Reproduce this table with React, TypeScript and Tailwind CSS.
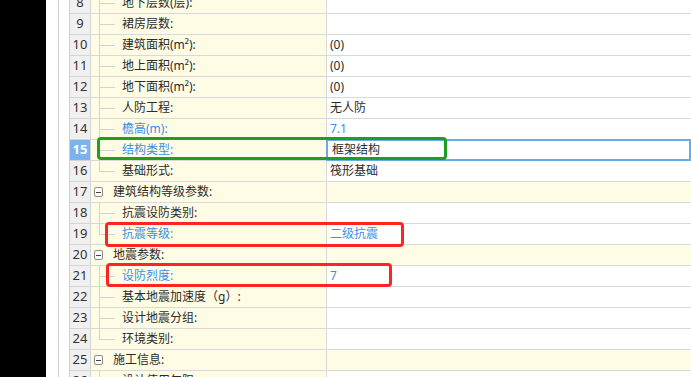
import React from "react";

type Row = {
  n: number;
  label: string;
  value?: string;
  group?: boolean;
  last?: boolean;
  blue?: boolean;
  valueBlue?: boolean;
  selected?: boolean;
};

const rows: Row[] = [
  { n: 8, label: "地下层数(层):" },
  { n: 9, label: "裙房层数:" },
  { n: 10, label: "建筑面积(m²):", value: "(0)" },
  { n: 11, label: "地上面积(m²):", value: "(0)" },
  { n: 12, label: "地下面积(m²):", value: "(0)" },
  { n: 13, label: "人防工程:", value: "无人防" },
  { n: 14, label: "檐高(m):", value: "7.1", blue: true, valueBlue: true },
  { n: 15, label: "结构类型:", value: "框架结构", blue: true, selected: true },
  { n: 16, label: "基础形式:", value: "筏形基础", last: true },
  { n: 17, label: "建筑结构等级参数:", group: true },
  { n: 18, label: "抗震设防类别:" },
  { n: 19, label: "抗震等级:", value: "二级抗震", blue: true, valueBlue: true, last: true },
  { n: 20, label: "地震参数:", group: true },
  { n: 21, label: "设防烈度:", value: "7", blue: true, valueBlue: true },
  { n: 22, label: "基本地震加速度（g）:" },
  { n: 23, label: "设计地震分组:" },
  { n: 24, label: "环境类别:", last: true },
  { n: 25, label: "施工信息:", group: true },
  { n: 26, label: "设计使用年限:" },
];

function CollapseBox() {
  return (
    <span className="absolute left-[3px] top-[5px] flex h-[10px] w-[9px] items-center justify-center rounded-[2px] border border-[#8c8c8c] bg-white">
      <span className="h-px w-[5px] bg-[#444]" />
    </span>
  );
}

function TreeLines({ last }: { last?: boolean }) {
  return (
    <>
      <span
        className={
          last
            ? "absolute left-[8px] top-0 h-[10px] w-px bg-[#d2d2d2]"
            : "absolute left-[8px] top-0 h-[21px] w-px bg-[#d2d2d2]"
        }
      />
      <span className="absolute left-[8px] top-[10px] h-px w-[16px] bg-[#d2d2d2]" />
    </>
  );
}

function GridRow({ row }: { row: Row }) {
  return (
    <div className="flex h-[21px]">
      <div
        className={
          row.selected
            ? "flex w-[21px] items-center justify-center border-b border-r border-[#d4d4d4] bg-[#7bb3ee] text-[13px] font-bold text-white"
            : "flex w-[21px] items-center justify-center border-b border-r border-[#d4d4d4] bg-[#f0f0f0] text-[13px] text-[#333]"
        }
      >
        {row.n}
      </div>
      <div className="relative flex w-[236px] items-center border-b border-r border-[#d9d9d9] bg-[#fffce6]">
        {row.group ? <CollapseBox /> : <TreeLines last={row.last} />}
        <span
          className={
            (row.group ? "pl-[22px] " : "pl-[31px] ") +
            (row.blue ? "text-[#3a8ee8]" : "text-[#2b2b2b]")
          }
        >
          {row.label}
        </span>
      </div>
      <div
        className={
          "relative flex flex-1 items-center border-b border-[#d9d9d9] " +
          (row.group ? "bg-[#fffce6]" : "bg-white")
        }
      >
        {row.selected && (
          <span className="absolute -bottom-px -left-px -top-px right-0 border-2 border-[#6aa9ea]" />
        )}
        <span
          className={
            (row.selected ? "pl-[5px] " : "pl-[3px] ") +
            (row.valueBlue ? "text-[#3a8ee8]" : "text-[#2b2b2b]")
          }
        >
          {row.value}
        </span>
      </div>
    </div>
  );
}

export default function App() {
  return (
    <div
      className="relative flex h-[377px] w-[691px] overflow-hidden bg-white text-[12px]"
      style={{ fontFamily: '"Noto Sans", "Noto Sans CJK SC", sans-serif' }}
    >
      <div className="h-full w-[46px] bg-black" />
      <div className="h-full w-[13px] border-r border-[#d0d0d0] bg-white" />
      <div className="h-full w-[10px] bg-white" />
      <div className="flex-1 border-l border-[#cfcfcf]">
        <div className="-mt-[7px]">
          {rows.map((r) => (
            <GridRow key={r.n} row={r} />
          ))}
        </div>
      </div>

      {/* highlight marks drawn over the grid */}
      <div className="pointer-events-none absolute left-[97px] top-[137px] h-[23px] w-[350px] rounded-[4px] border-[3px] border-[#1f9e1f]" />
      <div className="pointer-events-none absolute left-[105px] top-[222px] h-[25px] w-[299px] rounded-[4px] border-[3px] border-[#ff2424]" />
      <div className="pointer-events-none absolute left-[106px] top-[263px] h-[24px] w-[286px] rounded-[4px] border-[3px] border-[#ff2424]" />
    </div>
  );
}
